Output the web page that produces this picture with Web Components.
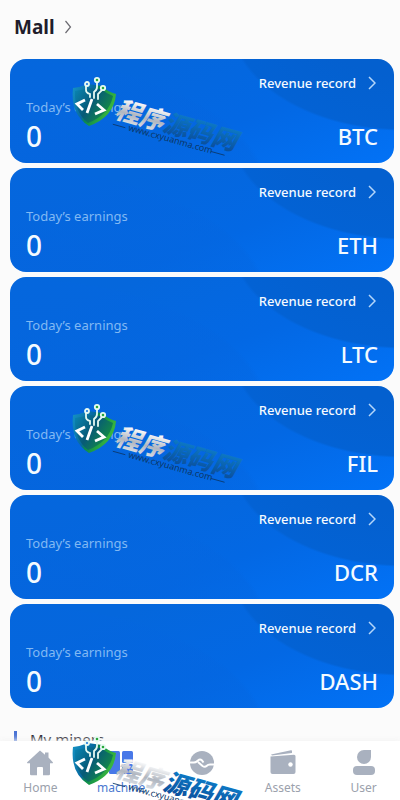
<!DOCTYPE html>
<html lang="en">
<head>
<meta charset="UTF-8">
<meta name="viewport" content="width=device-width, initial-scale=1">
<title>Mall</title>
<style>
  html, body { height: 100%; }
  body {
    margin: 0;
    background: #fbfbfb;
    font-family: "Noto Sans", "Open Sans", "Noto Sans CJK SC", sans-serif;
    color: #1f1d2b;
  }
</style>
</head>
<body>
<mall-page>
  <page-title slot="title">Mall</page-title>
  <coin-card coin="BTC" amount="0" marked></coin-card>
  <coin-card coin="ETH" amount="0"></coin-card>
  <coin-card coin="LTC" amount="0"></coin-card>
  <coin-card coin="FIL" amount="0" marked></coin-card>
  <coin-card coin="DCR" amount="0"></coin-card>
  <coin-card coin="DASH" amount="0"></coin-card>
  <section-title slot="more">My miners</section-title>
  <tab-bar slot="tabs">
    <tab-item icon="home">Home</tab-item>
    <tab-item icon="machine" active>machine</tab-item>
    <tab-item icon="trade" label="Trade"></tab-item>
    <tab-item icon="assets">Assets</tab-item>
    <tab-item icon="user">User</tab-item>
  </tab-bar>
</mall-page>

<script>
class MallPage extends HTMLElement {
  constructor() {
    super();
    this.attachShadow({ mode: 'open' });
    this.shadowRoot.innerHTML = `
      <style>
        :host { display: flex; flex-direction: column; height: 100vh; overflow: hidden; }
        main { flex: 1; min-height: 0; overflow: hidden; }
        .cards { display: grid; gap: 5px; padding: 0 6px 0 10px; }
      </style>
      <main>
        <slot name="title"></slot>
        <div class="cards"><slot></slot></div>
        <slot name="more"></slot>
      </main>
      <slot name="tabs"></slot>
    `;
  }
}
customElements.define('mall-page', MallPage);

class PageTitle extends HTMLElement {
  constructor() {
    super();
    this.attachShadow({ mode: 'open' });
    this.shadowRoot.innerHTML = `
      <style>
        :host { display: block; padding: 13px 14px 18px; }
        a {
          display: inline-flex;
          align-items: center;
          gap: 9px;
          color: inherit;
          text-decoration: none;
        }
        h1 { margin: 0; font-size: 19px; line-height: 28px; font-weight: 700; }
        svg { width: 8px; height: 14px; }
      </style>
      <a href="#mall">
        <h1><slot></slot></h1>
        <svg viewBox="0 0 8 14" fill="none" stroke="#6a6970" stroke-width="1.2"><path d="M1.5 1 6.5 7 1.5 13"/></svg>
      </a>
    `;
  }
}
customElements.define('page-title', PageTitle);

class CoinCard extends HTMLElement {
  constructor() {
    super();
    this.attachShadow({ mode: 'open' });
    this.shadowRoot.innerHTML = `
      <style>
        :host {
          display: block;
          position: relative;
          color: #f4faff;
        }
        .card {
          display: flex;
          flex-direction: column;
          height: 104px;
          box-sizing: border-box;
          padding: 14px 16px 0;
          border-radius: 16px;
          background:
            radial-gradient(ellipse 175px 112px at calc(100% + 10px) -40px, #0460cf 50%, #0362d4 98%, transparent 100%),
            radial-gradient(ellipse 260px 140px at 0 140px, #0565dd 0, #0566df66 98%, transparent 100%),
            linear-gradient(160deg, #0567dc 20%, #0368e4 60%, #0272f6 100%);
        }
        a {
          display: flex;
          align-self: flex-end;
          align-items: center;
          gap: 12px;
          padding-right: 2px;
          font-size: 13px;
          font-weight: 500;
          line-height: 20px;
          color: inherit;
          text-decoration: none;
        }
        a svg { width: 8px; height: 14px; }
        .label { font-size: 13px; line-height: 20px; color: #82b9f3; margin-top: 4px; }
        .row {
          display: flex;
          justify-content: space-between;
          align-items: center;
          font-weight: 500;
          line-height: 38px;
        }
        .amount { font-size: 28px; }
        .coin { font-size: 22px; }
        water-mark { position: absolute; left: 56px; top: 15px; }
      </style>
      <div class="card">
        <a href="#record">Revenue record
          <svg viewBox="0 0 8 14" fill="none" stroke="#b4d6fa" stroke-width="1.5"><path d="M1 1 7 7 1 13"/></svg>
        </a>
        <div class="label">Today’s earnings</div>
        <div class="row"><span class="amount"></span><span class="coin"></span></div>
      </div>
    `;
  }

  connectedCallback() {
    this.shadowRoot.querySelector('.amount').textContent = this.getAttribute('amount');
    this.shadowRoot.querySelector('.coin').textContent = this.getAttribute('coin');
    if (this.hasAttribute('marked')) {
      this.shadowRoot.appendChild(document.createElement('water-mark'));
    }
  }
}
customElements.define('coin-card', CoinCard);

class SectionTitle extends HTMLElement {
  constructor() {
    super();
    this.attachShadow({ mode: 'open' });
    this.shadowRoot.innerHTML = `
      <style>
        :host { display: block; padding: 19px 14px 0; }
        h2 {
          display: flex;
          align-items: center;
          gap: 13px;
          margin: 0;
          font-size: 15px;
          line-height: 24px;
          font-weight: 400;
        }
        h2::before { content: ""; width: 3px; height: 16px; background: #4a73d4; }
      </style>
      <h2><slot></slot></h2>
    `;
  }
}
customElements.define('section-title', SectionTitle);

class TabBar extends HTMLElement {
  constructor() {
    super();
    this.attachShadow({ mode: 'open' });
    this.shadowRoot.innerHTML = `
      <style>
        :host { display: block; position: relative; height: 59px; background: #fff; box-shadow: 0 -1px 6px #f3f3f3; }
        nav { display: grid; grid-template-columns: repeat(5, 1fr); margin-right: -4px; }
        water-mark { position: absolute; left: 66px; top: -8px; }
      </style>
      <nav><slot></slot></nav>
      <water-mark></water-mark>
    `;
  }
}
customElements.define('tab-bar', TabBar);

const TAB_ICONS = {
  home: '<path d="M14 1.5 1.2 13.2Q.6 14.2 2 14.300H4V25q0 1.200 1.200 1.200H11V19q0-1 1-1h4q1 0 1 1v7.200h5.800q1.200 0 1.200-1.200V14.300h2q1.400-.1.8-1.100L22.500 8.500V3.500H19V5.800Z"/>',
  machine: '<rect x="2" y="2" width="11" height="23" rx="1.500"/><rect x="15" y="2" width="11" height="12" rx="1.500"/><rect x="15" y="15" width="11" height="10" rx="1.500"/>',
  trade: '<circle cx="14" cy="14" r="12"/><path d="M1 13.500h5q2 0 4-2t4 0l1.500 2M27 15.500h-5q-2 0-3.500 1.500t-4 0L10 13" fill="none" stroke="#fff" stroke-width="2"/>',
  assets: '<path d="M2 5.500 22 1.200q1-.2 1 .8V4L3 6.500Z"/><path d="M1.500 7.500 25 5.800q1.500 0 1.500 1.500V23q0 2-2 2h-21q-2 0-2-2Z"/><circle cx="21.500" cy="15.500" r="2.200" fill="#fff"/>',
  user: '<path d="M14 1h7v7a7 7 0 1 1-7-7Z"/><rect x="3" y="17" width="22" height="9" rx="4"/>'
};

class TabItem extends HTMLElement {
  constructor() {
    super();
    this.attachShadow({ mode: 'open' });
    this.shadowRoot.innerHTML = `
      <style>
        :host { display: block; }
        a {
          display: flex;
          flex-direction: column;
          align-items: center;
          padding-top: 8px;
          color: #9ba1ac;
          font-size: 12px;
          line-height: 22px;
          text-decoration: none;
        }
        svg { width: 28px; height: 28px; fill: #a9b1bf; }
        :host([active]) a { color: #4a78d0; }
        :host([active]) svg { fill: #4878e8; }
      </style>
      <a href="#"><svg viewBox="0 0 28 28"></svg><span><slot></slot></span></a>
    `;
  }

  connectedCallback() {
    const icon = this.getAttribute('icon');
    const link = this.shadowRoot.querySelector('a');
    link.href = '#' + icon;
    if (this.hasAttribute('label')) link.setAttribute('aria-label', this.getAttribute('label'));
    this.shadowRoot.querySelector('svg').innerHTML = TAB_ICONS[icon];
  }
}
customElements.define('tab-item', TabItem);

class WaterMark extends HTMLElement {
  constructor() {
    super();
    this.attachShadow({ mode: 'open' });
    this.shadowRoot.innerHTML = `
      <style>
        :host { display: block; pointer-events: none; }
        svg { display: block; width: 180px; height: 90px; overflow: visible; }
        .name { font: italic 900 25px "Noto Sans CJK SC", sans-serif; }
        .site { font: 9px "Noto Sans", sans-serif; fill: #0b3768; }
      </style>
      <svg viewBox="0 0 180 90">
        <defs>
          <linearGradient id="shield" x1="0" y1="0" x2="1" y2="0.4">
            <stop offset="0" stop-color="#1694c4"/>
            <stop offset="0.45" stop-color="#0668a0"/>
            <stop offset="0.55" stop-color="#0a8a4c"/>
            <stop offset="1" stop-color="#3cb83c"/>
          </linearGradient>
          <linearGradient id="core" x1="0" y1="0" x2="1" y2="0.6">
            <stop offset="0" stop-color="#0a86b4"/>
            <stop offset="0.5" stop-color="#075a78"/>
            <stop offset="1" stop-color="#15903f"/>
          </linearGradient>
          <linearGradient id="silver" x1="0" y1="0" x2="0" y2="1">
            <stop offset="0.2" stop-color="#fff"/>
            <stop offset="0.6" stop-color="#b0b6c0"/>
            <stop offset="1" stop-color="#e9edf2"/>
          </linearGradient>
          <linearGradient id="blue" x1="0" y1="0" x2="0" y2="1">
            <stop offset="0.2" stop-color="#0d7ac6"/>
            <stop offset="1" stop-color="#0a4795"/>
          </linearGradient>
        </defs>
        <path d="M7 14Q15 13 22 10L36 12Q42 18 50 20Q48 43 23 52Q4 40 7 14Z" fill="url(#shield)"/>
        <path d="M9 17Q16 16 23 14L35 15Q41 20 47 22Q43 41 22 49Q8 38 9 17Z" fill="url(#core)"/>
        <g fill="none" stroke="#e6faf2" stroke-width="1.8" stroke-linecap="round">
          <path d="M20 12v4q0 3 4 4v3M31 8v5q0 3-3 5v6M36 16l-4 4v5"/>
          <circle cx="21" cy="10" r="2" fill="#1d78df"/>
          <circle cx="31" cy="6" r="2.200" fill="#29a83a"/>
          <circle cx="37" cy="14" r="2.200" fill="#29a83a"/>
        </g>
        <g fill="none" stroke="#fff" stroke-width="2.800">
          <path d="M19 26 11 30l6 6M26 25l-5 14M31 30l7 6-9 4"/>
        </g>
        <g transform="translate(47 42) rotate(15.5)">
          <text class="name" x="1" y="1" fill="url(#silver)">程序</text>
          <text class="name" x="51" y="1" fill="url(#blue)">源码网</text>
          <text class="site" x="18" y="10">www.cxyuanma.com</text>
          <path d="M2 8h13M104 8h14" stroke="#0b3768" stroke-width="0.800"/>
        </g>
      </svg>
    `;
  }
}
customElements.define('water-mark', WaterMark);
</script>
</body>
</html>
